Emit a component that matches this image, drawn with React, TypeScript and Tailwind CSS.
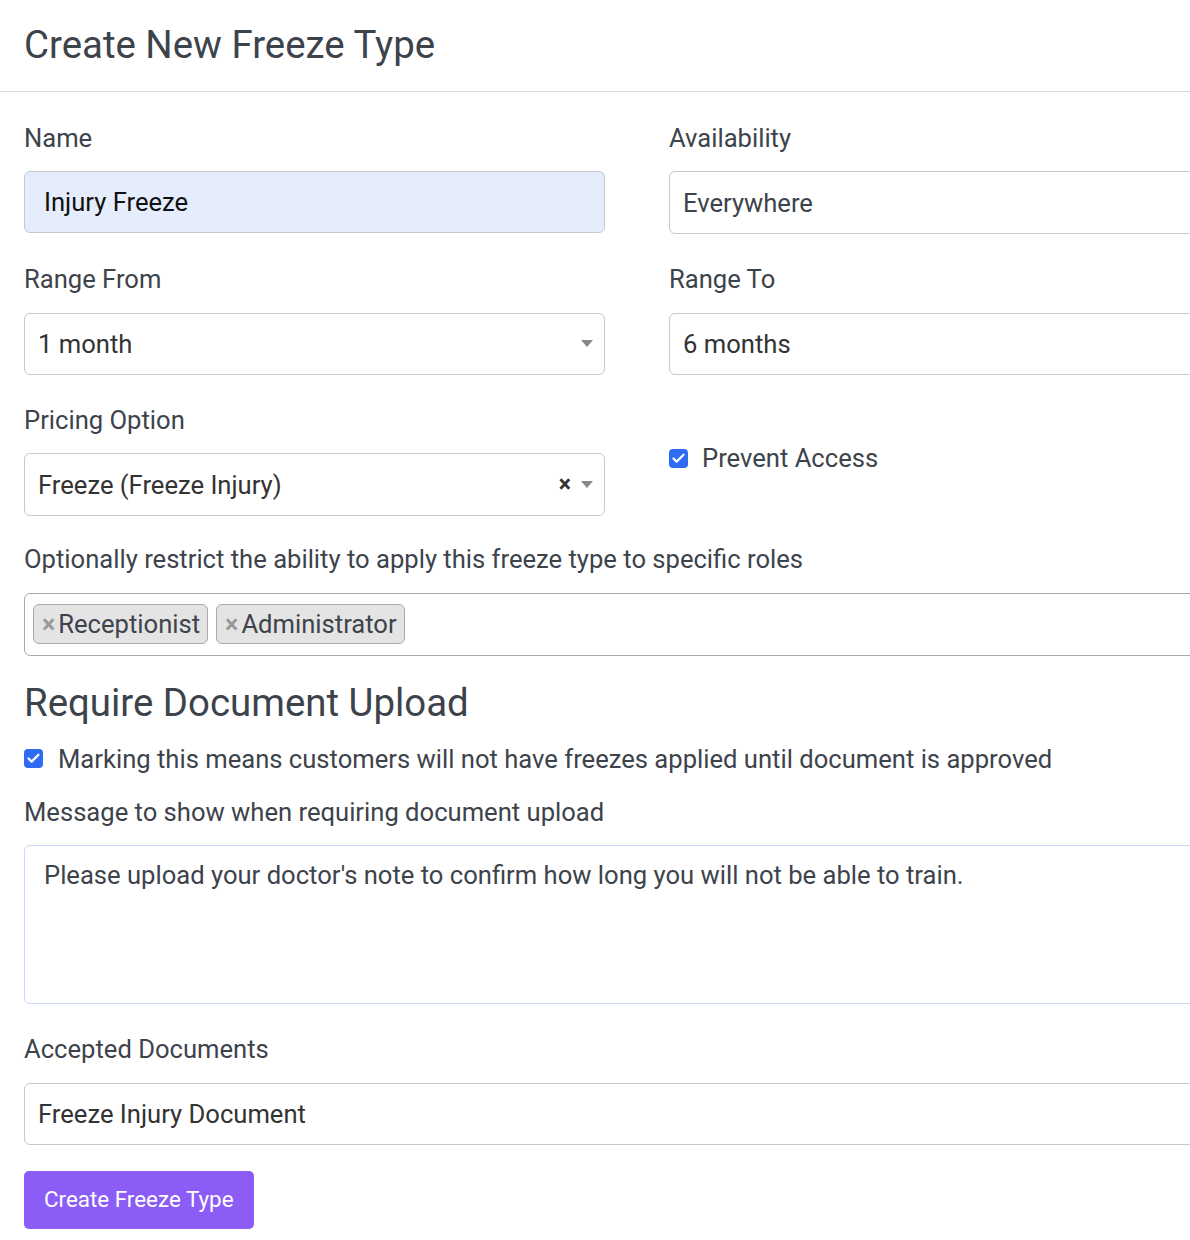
import { Check } from "lucide-react";

const font = { fontFamily: "Roboto, 'Noto Sans', sans-serif" };

function Label({ children }: { children: React.ReactNode }) {
  return <div className="text-[25.6px] leading-[38.4px] text-[#3d434b] mb-[14px]">{children}</div>;
}

function Caret() {
  return (
    <svg width="12" height="7" viewBox="0 0 12 7" className="flex-shrink-0">
      <path d="M0 0 L12 0 L6 7 Z" fill="#888" />
    </svg>
  );
}

function Box() {
  return (
    <div className="w-[19px] h-[19px] rounded-[4px] bg-[#2f6cf4] flex items-center justify-center flex-shrink-0">
      <Check size={15} strokeWidth={3.5} className="text-white" />
    </div>
  );
}

function Tag({ label }: { label: string }) {
  return (
    <div className="h-[40px] flex items-center pl-[8px] pr-[7px] bg-[#e4e4e4] border border-[#aaa] rounded-[6px] text-[25.6px] text-[#3d434b]">
      <span className="text-[#999] font-bold text-[25px] mr-[3px] leading-none">×</span>
      {label}
    </div>
  );
}

export default function App() {
  return (
    <div className="w-[1190px] min-h-[1240px] bg-white overflow-hidden" style={font}>
      {/* Header */}
      <div className="w-[1274px] h-[92px] border-b border-[#d6dce3] px-6 flex items-center">
        <h1 className="text-[38.4px] text-[#3d434b] leading-[46px] -mt-[2px]">Create New Freeze Type</h1>
      </div>

      <div className="w-[1274px] px-6 pt-[27px]">
        <div className="grid grid-cols-2 gap-x-16">
          <div className="mb-[26px]">
            <Label>Name</Label>
            <div className="h-[62px] rounded-[6px] border border-[#c3cad3] bg-[#e5edfd] flex items-center px-[19px] text-[25.6px] text-[#111]">
              Injury Freeze
            </div>
          </div>
          <div className="mb-[26px]">
            <Label>Availability</Label>
            <div className="h-[63px] rounded-[6px] border border-[#c3cad3] flex items-center px-[13px] text-[25.6px] text-[#3d434b]">
              Everywhere
            </div>
          </div>

          <div className="mb-[26px]">
            <Label>Range From</Label>
            <div className="h-[62px] rounded-[6px] border border-[#c3cad3] flex items-center justify-between pl-[13px] pr-[11px] text-[25.6px] text-[#333]">
              <span>1 month</span>
              <Caret />
            </div>
          </div>
          <div className="mb-[26px]">
            <Label>Range To</Label>
            <div className="h-[62px] rounded-[6px] border border-[#c3cad3] flex items-center px-[13px] text-[25.6px] text-[#333]">
              6 months
            </div>
          </div>

          <div className="mb-[24px]">
            <Label>Pricing Option</Label>
            <div className="h-[63px] rounded-[6px] border border-[#c3cad3] flex items-center justify-between pl-[13px] pr-[11px] text-[25.6px] text-[#333]">
              <span>Freeze (Freeze Injury)</span>
              <div className="flex items-center gap-[10px]">
                <span className="font-bold text-[23px] text-[#333] leading-none">×</span>
                <Caret />
              </div>
            </div>
          </div>
          <div className="pt-[38px]">
            <div className="flex items-center gap-[14px]">
              <Box />
              <span className="text-[25.6px] leading-[38.4px] text-[#3d434b]">Prevent Access</span>
            </div>
          </div>
        </div>

        <Label>Optionally restrict the ability to apply this freeze type to specific roles</Label>
        <div className="h-[63px] rounded-[6px] border border-[#aaa] flex items-center gap-[8px] px-[8px]">
          <Tag label="Receptionist" />
          <Tag label="Administrator" />
        </div>

        <h2 className="text-[38.4px] text-[#3d434b] leading-[46px] mt-[24px] mb-[14px]">Require Document Upload</h2>

        <div className="flex items-center gap-[15px] mb-[15px]">
          <Box />
          <span className="text-[25.6px] leading-[38.4px] text-[#3d434b]">
            Marking this means customers will not have freezes applied until document is approved
          </span>
        </div>

        <Label>Message to show when requiring document upload</Label>
        <div className="h-[159px] rounded-[6px] border border-[#cbd8fb] px-[19px] pt-[10px] text-[25.6px] leading-[38.4px] text-[#3d434b]">
          Please upload your doctor's note to confirm how long you will not be able to train.
        </div>

        <div className="mt-[26px]">
          <Label>Accepted Documents</Label>
          <div className="h-[62px] rounded-[6px] border border-[#c3cad3] flex items-center px-[13px] text-[25.6px] text-[#333]">
            Freeze Injury Document
          </div>
        </div>

        <button className="mt-[26px] h-[58px] px-[20px] rounded-[5px] bg-[#8b5cf6] text-white text-[22.4px]">
          Create Freeze Type
        </button>
      </div>
    </div>
  );
}
